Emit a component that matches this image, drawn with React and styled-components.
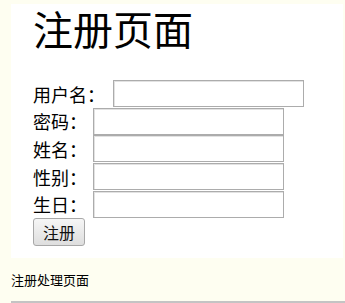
import React from "react";
import styled, { createGlobalStyle } from "styled-components";

const Global = createGlobalStyle`
  html, body { margin: 0; padding: 0; background: #fefef1; }
  body { font-family: "Noto Sans CJK SC", "Liberation Sans", sans-serif; color: #000; }
`;

const Page = styled.div`
  padding: 4px 0 0 11px;
  width: 345px;
  height: 303px;
  box-sizing: border-box;
  overflow: hidden;
`;

const Panel = styled.div`
  width: 332px;
  height: 254px;
  box-sizing: border-box;
  background: #ffffff;
  padding: 2px 0 0 22px;
`;

const Title = styled.h1`
  margin: 0;
  font-size: 40px;
  line-height: 44px;
  font-weight: normal;
  font-family: "Noto Sans CJK SC", serif;
`;

const Form = styled.form`
  display: flex;
  flex-direction: column;
  margin-top: 30px;
`;

const Row = styled.div`
  display: flex;
  align-items: center;
  height: 27.6px;
  gap: ${(p) => p.$gap}px;
`;

const Label = styled.span`
  font-size: 18px;
  line-height: 20px;
`;

const Input = styled.input`
  box-sizing: border-box;
  width: 191px;
  height: 27px;
  margin: 0;
  border: 1px solid #acacac;
  box-shadow: inset 1px 1px 0 #e2e2e2;
  background: #fff;
  padding: 0;
`;

const Button = styled.button`
  box-sizing: border-box;
  width: 52px;
  height: 28px;
  margin-top: 0.5px;
  padding: 0;
  font-family: "Noto Sans CJK SC", sans-serif;
  font-size: 16px;
  line-height: 20px;
  color: #111;
  border: 1px solid #a8a8a8;
  border-radius: 3px;
  background: linear-gradient(#f6f6f6, #dedede);
`;

const Footer = styled.div`
  margin-top: 14px;
  font-size: 13px;
  line-height: 16px;
`;

const Rule = styled.div`
  margin-top: 13px;
  height: 2px;
  background: #c4c4c4;
`;

const fields = [
  { label: "用户名：", gap: 8 },
  { label: "密码：", gap: 6 },
  { label: "姓名：", gap: 6 },
  { label: "性别：", gap: 6 },
  { label: "生日：", gap: 6 },
];

export default function App() {
  return (
    <Page>
      <Global />
      <Panel>
        <Title>注册页面</Title>
        <Form onSubmit={(e) => e.preventDefault()}>
          {fields.map((f) => (
            <Row key={f.label} $gap={f.gap}>
              <Label>{f.label}</Label>
              <Input type="text" />
            </Row>
          ))}
          <Row $gap={0}>
            <Button type="submit">注册</Button>
          </Row>
        </Form>
      </Panel>
      <Footer>注册处理页面</Footer>
      <Rule />
    </Page>
  );
}
